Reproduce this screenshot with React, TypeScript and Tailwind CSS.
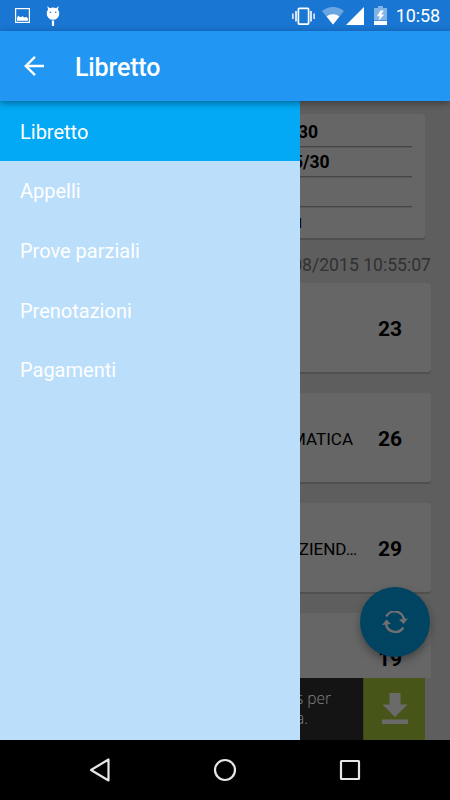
import React from 'react';

const menuItems = ['Libretto', 'Appelli', 'Prove parziali', 'Prenotazioni', 'Pagamenti'];

const exams = [
  { name: '', grade: '23' },
  { name: 'MATICA', grade: '26' },
  { name: 'ZIEND…', grade: '29' },
  { name: '', grade: '19' },
];

const StatusBar: React.FC = () => (
  <div className="flex h-[31px] items-center justify-between bg-[#1976d2] pl-[15px] pr-[10px] text-white">
    <div className="flex items-center gap-[16px]">
      <svg className="h-[15px] w-[15px]" viewBox="0 0 15 15">
        <rect x="0.6" y="0.6" width="13.8" height="13.8" fill="none" stroke="#fff" strokeWidth="1.2" />
        <path d="M2 12.700V9.500L3.500 7.800 5 9h1.500L7.500 8l1.700 1.500 2.300-.5L13 10.500v2.200z" fill="#fff" />
      </svg>
      <svg className="h-[20px] w-[14px]" viewBox="0 0 14 20">
        <path d="M1.300 0 3.800 2.300A6.500 6.500 0 0 1 10.200 2.300L12.700 0 11.900 3.600A6.300 6.300 0 0 1 13.300 7.500 6.300 6.300 0 0 1 .7 7.500 6.300 6.300 0 0 1 2.100 3.600z" fill="#fff" />
        <path d="M5.900 14.500h2.200V19a1.100 1.100 0 0 1-2.200 0z" fill="#fff" />
        <circle cx="4.300" cy="6.300" r="0.8" fill="#1976d2" />
        <circle cx="9.700" cy="6.300" r="0.8" fill="#1976d2" />
      </svg>
    </div>
    <div className="flex items-center">
      <svg className="h-[18px] w-[23px]" viewBox="0 0 23 18" fill="none" stroke="#fff">
        <rect x="6.400" y="1.400" width="10.200" height="15.700" rx="0.8" strokeWidth="1.700" />
        <path d="M4 4v10.500M19 4v10.500" strokeWidth="1.600" />
        <path d="M.9 6.500v5.500M22.100 6.500v5.500" strokeWidth="1.400" />
      </svg>
      <svg className="ml-[7px] h-[18px] w-[22px]" viewBox="0 0 22 18" fill="#fff">
        <path d="M0 4A17 17 0 0 1 22 4L11 17.500z" opacity="0.35" />
        <path d="M4.600 9.600a9.800 9.800 0 0 1 12.800 0L11 17.500z" />
      </svg>
      <svg className="ml-[2px] h-[18px] w-[18px]" viewBox="0 0 18 18">
        <path d="M18 0v18H0z" fill="#fff" />
      </svg>
      <svg className="ml-[10px] h-[19px] w-[13px]" viewBox="0 0 13 19">
        <path d="M4 0h5v2h4v12.500H0V2h4z" fill="#fff" opacity="0.45" />
        <path d="M0 15h13v4H0z" fill="#fff" />
        <path d="M6.500 4.500 2.800 10.300h3L4.500 14.800 10.300 8.500H7.200L9.800 4.500z" fill="#fff" />
      </svg>
      <span className="ml-[9px] pt-[1px] text-[18px] leading-none tracking-[-0.1px]">10:58</span>
    </div>
  </div>
);

const Toolbar: React.FC = () => (
  <header className="relative z-10 flex h-[70px] items-center bg-[#2196f3] pl-[24px] text-white shadow-[0_2px_7px_rgba(0,0,0,0.4)]">
    <svg className="h-[20px] w-[20px]" viewBox="0 0 20 20" fill="none" stroke="#fff" strokeWidth="2.400">
      <path d="M20 10H2M11 .9 1.800 10l9.200 9.100" />
    </svg>
    <h1 className="ml-[31px] pt-[3px] text-[25px] font-medium leading-none tracking-[-0.15px]">Libretto</h1>
  </header>
);

const Drawer: React.FC = () => (
  <nav className="w-[300px] shrink-0 bg-[#bbdefb] text-white">
    {menuItems.map((item, i) => (
      <div
        key={item}
        className={`flex h-[59.6px] items-center pl-[20px] pt-[2px] text-[20px] ${i === 0 ? 'bg-[#03a9f4]' : ''}`}
      >
        {item}
      </div>
    ))}
  </nav>
);

const SummaryCard: React.FC = () => (
  <div className="mr-[25px] mt-[13px] h-[124px] shrink-0 rounded-r-[3px] bg-[#666] pr-[13px] pt-[3px] text-[17.5px] font-bold leading-[31px] shadow-[0_2px_0_#4f4f4f]">
    <div className="h-[30px] border-b border-[#454545] shadow-[0_1px_0_#595959]">
      <span className="-ml-[2px]">30</span>
    </div>
    <div className="h-[30px] border-b border-[#454545] shadow-[0_1px_0_#595959]">
      <span className="-ml-[7px]">5/30</span>
    </div>
    <div className="h-[30px] border-b border-[#454545] shadow-[0_1px_0_#595959]" />
    <div className="-ml-[8px]">u</div>
  </div>
);

const AdBanner: React.FC = () => (
  <div className="mr-[25px] flex h-[62px] shrink-0">
    <div className="flex-1 bg-[#141414] pt-[10px] font-['Open_Sans'] text-[15.5px] font-light leading-[20px] text-[#848484]">
      <div className="-ml-[4px]">s per</div>
      <div className="-ml-[4px]">a.</div>
    </div>
    <div className="flex w-[62px] items-center justify-center border-l border-[#3c4616] bg-[#485518]">
      <svg className="mb-[1px] h-[31px] w-[26px]" viewBox="0 0 26 31" fill="#6a6a6a">
        <path d="M7.500 0h11v11.500H25.500L13 24 .5 11.500h7zM0 26.500h26V31H0z" />
      </svg>
    </div>
  </div>
);

const App: React.FC = () => (
  <div className="flex h-[800px] w-[450px] flex-col overflow-hidden bg-black font-['Roboto',sans-serif]">
    <StatusBar />
    <Toolbar />
    <div className="flex h-[639px]">
      <Drawer />
      <main className="relative flex min-w-0 flex-1 flex-col overflow-hidden bg-[#5e5e5e] text-black">
        <SummaryCard />
        <p className="mr-[19px] flex h-[45px] shrink-0 items-center justify-end whitespace-nowrap pt-[10px] text-[17.6px] text-[#313131]">
          08/2015 10:55:07
        </p>
        <div className="flex min-h-0 flex-1 flex-col gap-[21px] overflow-hidden">
          {exams.map((exam) => (
            <div
              key={exam.grade}
              className="mr-[19px] flex h-[89px] shrink-0 items-center rounded-r-[3px] bg-[#666] pt-[4px] shadow-[0_2px_0_#505050]"
            >
              <span
                className={`flex justify-end whitespace-nowrap text-[17px] ${exam.name.endsWith('…') ? 'w-[57px]' : 'w-[53px]'}`}
              >
                {exam.name}
              </span>
              <span className="ml-auto mr-[29px] text-[21px] font-bold">{exam.grade}</span>
            </div>
          ))}
        </div>
        <AdBanner />
        <button className="absolute right-[20px] top-[486px] flex h-[70px] w-[70px] items-center justify-center rounded-full bg-[#014462] shadow-[0_4px_9px_rgba(0,0,0,0.35)]">
          <svg className="h-[22px] w-[26px]" viewBox="0 0 26 22" fill="none" stroke="#707070" strokeWidth="2.400">
            <path d="M4.300 5.500A9.400 9.400 0 0 1 22 9M21.300 16.500A9.400 9.400 0 0 1 4 12.500" />
            <path d="M17 8.500 26 7.500 21.500 13zM9 13 0 14l4.500-5.500z" fill="#707070" stroke="none" />
          </svg>
        </button>
      </main>
    </div>
    <footer className="flex h-[60px] items-center justify-between pl-[89px] pr-[89px]">
      <svg className="h-[24px] w-[22px]" viewBox="0 0 22 24" fill="none" stroke="#e6e6e6" strokeWidth="2.200" strokeLinejoin="round">
        <path d="M19.500 1.500v21L2 12z" />
      </svg>
      <svg className="h-[24px] w-[24px]" viewBox="0 0 24 24" fill="none" stroke="#e6e6e6" strokeWidth="2.200">
        <circle cx="12" cy="12" r="10" />
      </svg>
      <svg className="h-[22px] w-[22px]" viewBox="0 0 22 22" fill="none" stroke="#e6e6e6" strokeWidth="2.200">
        <rect x="2" y="2" width="18" height="18" rx="0.5" />
      </svg>
    </footer>
  </div>
);

export default App;
